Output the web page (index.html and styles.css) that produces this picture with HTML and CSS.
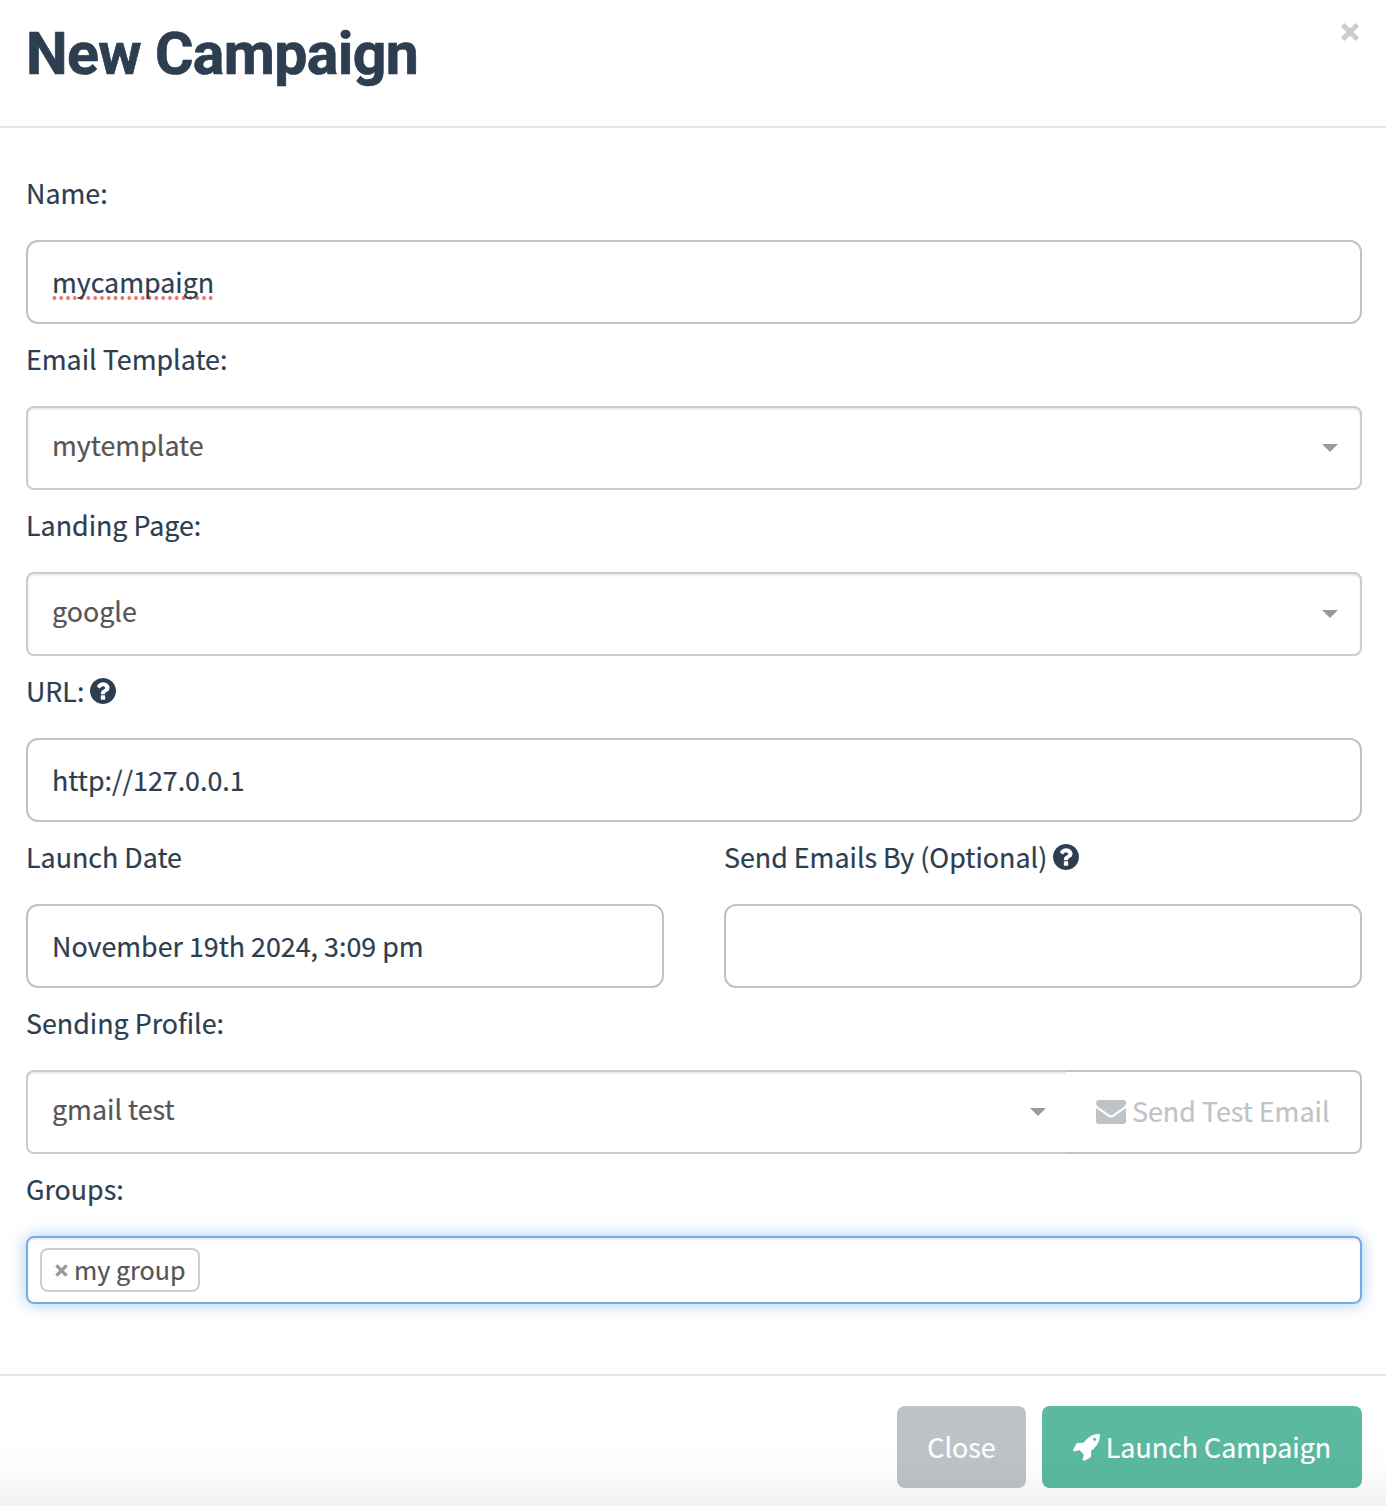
FILE: index.html
```html
<!DOCTYPE html>
<html lang="en">
<head>
<meta charset="utf-8">
<title>New Campaign</title>
<link rel="stylesheet" href="styles.css">
</head>
<body>
<svg class="defs" aria-hidden="true">
  <symbol id="question" viewBox="0 0 1536 1536"><path d="M896 1248v-192q0-14-9-23t-23-9H672q-14 0-23 9t-9 23v192q0 14 9 23t23 9h192q14 0 23-9t9-23zm256-672q0-88-55.5-163T958 297t-170-41q-243 0-371 213-15 24 8 42l132 100q7 6 19 6 16 0 25-12 53-68 86-92 34-24 86-24 48 0 85.500 26t37.500 59q0 38-20 61t-68 45q-63 28-115.500 86.500T640 892v36q0 14 9 23t23 9h192q14 0 23-9t9-23q0-19 21.500-49.500T972 829q32-18 49-28.500t46-35 44.500-48 28-60.500 12.500-81zm384 192q0 209-103 385.500T1153.500 1433 768 1536t-385.500-103T103 1153.500 0 768t103-385.500T382.500 103 768 0t385.500 103T1433 382.500 1536 768z"/></symbol>
</svg>
<div class="modal">
  <header class="modal-header">
    <h1 class="title">New Campaign</h1>
    <svg class="dismiss" viewBox="0 0 20 20"><path d="M2.700 2.700 17.300 17.300M17.300 2.700 2.700 17.300"/></svg>
  </header>
  <main class="modal-body">
    <div class="label">Name:</div>
    <div class="input"><span class="misspelled">mycampaign</span></div>
    <div class="label">Email Template:</div>
    <div class="select"><span>mytemplate</span><i class="arrow"></i></div>
    <div class="label">Landing Page:</div>
    <div class="select"><span>google</span><i class="arrow"></i></div>
    <div class="label">URL: <svg class="help"><use href="#question"/></svg></div>
    <div class="input"><span>http://127.0.0.1</span></div>
    <div class="columns">
      <div>
        <div class="label">Launch Date</div>
        <div class="input"><span>November 19th 2024, 3:09 pm</span></div>
      </div>
      <div>
        <div class="label">Send Emails By (Optional) <svg class="help"><use href="#question"/></svg></div>
        <div class="input"></div>
      </div>
    </div>
    <div class="label">Sending Profile:</div>
    <div class="profile">
      <div class="select"><span>gmail test</span><i class="arrow"></i></div>
      <div class="send-test">
        <svg class="envelope" viewBox="0 256 1792 1408" preserveAspectRatio="none"><path d="M1792 710v794q0 66-47 113t-113 47H160q-66 0-113-47T0 1504V710q44 49 101 87 362 246 497 345 57 42 92.500 65.500t94.500 48 110 24.500h2q51 0 110-24.500t94.500-48 92.500-65.500q170-123 498-345 57-39 100-87zm0-294q0 79-49 151t-122 123q-376 261-468 325-10 7-42.500 31t-54 38.500-52 32.500-57.500 27-50 9h-2q-23 0-50-9t-57.500-27-52-32.500-54-38.500-42.500-31q-91-64-262-182.500T174 690q-62-42-117-115.500T2 438q0-78 41.500-130T162 256h1472q65 0 112.500 47t47.500 113z"/></svg>
        <span>Send Test Email</span>
      </div>
    </div>
    <div class="label">Groups:</div>
    <div class="groups">
      <div class="tag">
        <svg class="remove" viewBox="0 0 13 13"><path d="M1.400 1.400 11.600 11.600M11.600 1.400 1.400 11.600"/></svg>
        <span>my group</span>
      </div>
    </div>
  </main>
  <footer class="modal-footer">
    <div class="button close">Close</div>
    <div class="button launch">
      <svg class="rocket" viewBox="36 128 1628 1634"><path d="M1440 448q0-40-28-68t-68-28-68 28-28 68 28 68 68 28 68-28 28-68zm224-288q0 249-75.500 430.500T1335 953q-81 80-195 176l-20 379q-2 16-16 26l-384 224q-7 4-16 4-12 0-23-9l-64-64q-13-14-8-32l85-276-281-281-276 85q-3 1-9 1-14 0-23-9l-64-64q-17-19-5-39l224-384q10-14 26-16l379-20q96-114 176-195 188-187 358-258t431-71q14 0 24 9.500t10 22.500z"/></svg>
      <span>Launch Campaign</span>
    </div>
  </footer>
  <div class="shade"></div>
</div>
</body>
</html>
```
FILE: styles.css
```css
* { box-sizing: border-box; }
body {
  margin: 0;
  background: #fff;
  color: #2c3e50;
  font: 26.82px "Noto Sans CJK SC", "Open Sans", sans-serif;
  -webkit-text-stroke: .2px currentColor;
}
svg { display: block; flex: none; fill: currentColor; }
.defs { position: absolute; width: 0; height: 0; }
.modal {
  position: relative;
  height: 1506px;
  overflow: hidden;
  display: flex;
  flex-direction: column;
  white-space: nowrap;
}
.modal-header {
  height: 128px;
  border-bottom: 2px solid #e5e5e5;
  padding: 21px 26px 0 26px;
  display: flex;
  justify-content: space-between;
}
.title {
  margin: 0;
  font: 700 59px/66px Roboto, sans-serif;
  letter-spacing: -.65px;
  -webkit-text-stroke-width: .7px;
}
.dismiss {
  width: 20px;
  height: 20px;
  margin-top: 1px;
  stroke: #ccc;
  stroke-width: 5;
}
.modal-body { padding: 30px 24px 70px 26px; }
.label {
  height: 82px;
  line-height: 70px;
  display: flex;
}
.help {
  width: 26px;
  height: 26px;
  margin: 22px 0 0 6px;
}
.input {
  height: 84px;
  border: 2px solid #bdc3c7;
  border-radius: 12px;
  padding-left: 24px;
  line-height: 79px;
}
.misspelled {
  padding-bottom: 4px;
  background: radial-gradient(circle, #ec7067 1.600px, transparent 2.200px) -1px 34px / 6.800px 4px repeat-x;
}
.select {
  height: 84px;
  border: 2px solid #ccc;
  border-radius: 8px;
  padding: 0 22px 0 24px;
  display: flex;
  justify-content: space-between;
  line-height: 73px;
  color: #555;
  box-shadow: inset 0 2px 2px rgba(0, 0, 0, .075);
}
.arrow {
  height: 0;
  margin-top: 36px;
  border: 8px solid transparent;
  border-top-color: #999;
  border-bottom: 0;
}
.columns {
  display: grid;
  grid-template-columns: 1fr 1fr;
  gap: 60px;
}
.profile { display: flex; }
.profile .select {
  width: 1040px;
  padding-right: 20px;
  border-right: 0;
  border-radius: 8px 0 0 8px;
  box-shadow: inset 0 3px 2px -1px rgba(0, 0, 0, .075);
}
.send-test {
  flex: 1;
  height: 84px;
  border: 2px solid #bdc3c7;
  border-left: 0;
  border-radius: 0 8px 8px 0;
  padding-left: 30px;
  display: flex;
  gap: 6px;
  line-height: 77px;
  color: #bdc3c7;
  background: #fff;
}
.envelope {
  width: 30px;
  height: 24px;
  margin-top: 28px;
}
.groups {
  height: 68px;
  border: 2px solid #74ace6;
  border-radius: 8px;
  padding: 10px 12px;
  box-shadow: inset 0 2px 2px rgba(0, 0, 0, .075), 0 0 16px rgba(102, 165, 225, .6);
}
.tag {
  width: 160px;
  height: 44px;
  border: 2px solid #ccc;
  border-radius: 8px;
  padding-left: 13px;
  display: flex;
  gap: 6px;
  font-size: 25.100px;
  line-height: 39px;
  color: #555;
}
.remove {
  width: 13px;
  height: 13px;
  margin-top: 14px;
  stroke: #999;
  stroke-width: 3.300;
}
.modal-footer {
  flex: 1;
  border-top: 2px solid #e5e5e5;
  padding: 30px 24px 0;
  display: flex;
  justify-content: flex-end;
  gap: 16px;
}
.button {
  height: 82px;
  border-radius: 8px;
  display: flex;
  justify-content: center;
  gap: 6px;
  line-height: 81px;
  color: #fff;
}
.close { width: 129px; background: #bdc3c7; }
.launch { width: 320px; background: #5ab99f; }
.rocket {
  width: 27px;
  height: 27px;
  margin-top: 28px;
}
.shade {
  position: absolute;
  inset: auto 0 0;
  height: 66px;
  background: linear-gradient(rgba(0, 0, 0, 0), rgba(0, 0, 0, .015) 50%, rgba(0, 0, 0, .055));
}
```
